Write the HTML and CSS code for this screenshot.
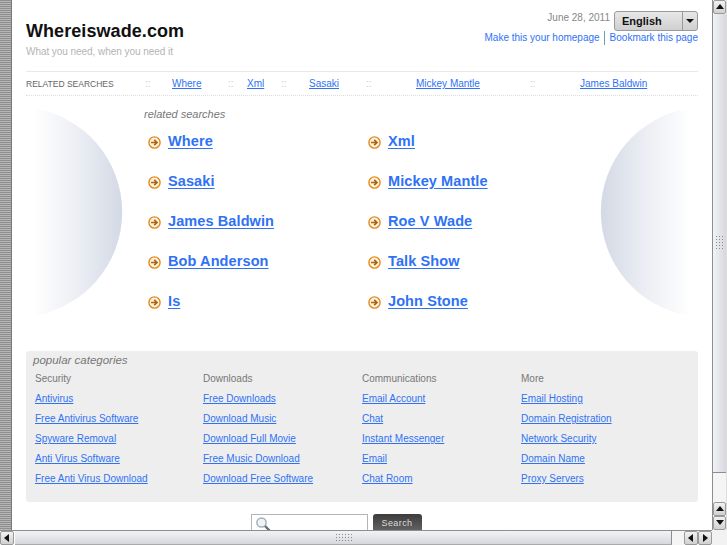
FILE: index.html
```html
<!DOCTYPE html>
<html lang="en">
  <head>
    <meta charset="UTF-8" />
    <meta name="viewport" content="width=device-width, initial-scale=1.0" />
    <title>Whereiswade.com</title>

    <link rel="stylesheet" href="styles.css">
  </head>
  <body>
    <svg class="defs" width="0" height="0" aria-hidden="true">
      <defs>
        <linearGradient id="ball-left" x1="0" y1="0" x2="1" y2="0">
          <stop offset="0" stop-color="#ffffff" />
          <stop offset="0.45" stop-color="#eef0f5" />
          <stop offset="1" stop-color="#d3d9e5" />
        </linearGradient>
        <linearGradient id="ball-right" x1="1" y1="0" x2="0" y2="0">
          <stop offset="0" stop-color="#ffffff" />
          <stop offset="0.45" stop-color="#eef0f5" />
          <stop offset="1" stop-color="#d3d9e5" />
        </linearGradient>
        <symbol id="go" viewBox="0 0 13 13">
          <circle cx="6.5" cy="6.5" r="5.6" fill="#fdf3e2" stroke="#e48a16" stroke-width="1.4" />
          <path d="M3 6.5h5.5M6.2 3.8l2.8 2.7-2.8 2.7" fill="none" stroke="#a9650f" stroke-width="1.7" />
        </symbol>
      </defs>
    </svg>

    <div class="window">
      <div class="strip"></div>

      <div class="page">
        <header class="top">
          <div class="brand">
            <h1>Whereiswade.com</h1>
            <p>What you need, when you need it</p>
          </div>
          <div class="tools">
            <div class="tools-row">
              <span class="date">June 28, 2011</span>
              <div class="lang">
                <span>English</span>
                <i></i>
              </div>
            </div>
            <div class="tools-links">
              <a href="#">Make this your homepage</a>
              <a href="#">Bookmark this page</a>
            </div>
          </div>
        </header>

        <nav class="related-nav">
          <span class="nav-title">RELATED SEARCHES</span>
          <span class="sep">::</span><a href="#">Where</a>
          <span class="sep">::</span><a href="#">Xml</a>
          <span class="sep">::</span><a href="#">Sasaki</a>
          <span class="sep">::</span><a href="#">Mickey Mantle</a>
          <span class="sep">::</span><a href="#">James Baldwin</a>
        </nav>

        <section class="results">
          <svg class="ball" width="90" height="212" viewBox="0 0 90 212">
            <path d="M0 2.2A105 105 0 0 1 0 209.8Z" fill="url(#ball-left)" />
          </svg>

          <div class="results-main">
            <h2>related searches</h2>
            <ul class="result-list">
              <li><svg width="13" height="13"><use href="#go" /></svg><a href="#">Where</a></li>
              <li><svg width="13" height="13"><use href="#go" /></svg><a href="#">Xml</a></li>
              <li><svg width="13" height="13"><use href="#go" /></svg><a href="#">Sasaki</a></li>
              <li><svg width="13" height="13"><use href="#go" /></svg><a href="#">Mickey Mantle</a></li>
              <li><svg width="13" height="13"><use href="#go" /></svg><a href="#">James Baldwin</a></li>
              <li><svg width="13" height="13"><use href="#go" /></svg><a href="#">Roe V Wade</a></li>
              <li><svg width="13" height="13"><use href="#go" /></svg><a href="#">Bob Anderson</a></li>
              <li><svg width="13" height="13"><use href="#go" /></svg><a href="#">Talk Show</a></li>
              <li><svg width="13" height="13"><use href="#go" /></svg><a href="#">Is</a></li>
              <li><svg width="13" height="13"><use href="#go" /></svg><a href="#">John Stone</a></li>
            </ul>
          </div>

          <svg class="ball" width="90" height="212" viewBox="0 0 90 212">
            <path d="M90 2.2A105 105 0 0 0 90 209.8Z" fill="url(#ball-right)" />
          </svg>
        </section>

        <section class="popular">
          <h2>popular categories</h2>
          <div class="cat-grid">
            <ul>
              <li class="cat-head">Security</li>
              <li><a href="#">Antivirus</a></li>
              <li><a href="#">Free Antivirus Software</a></li>
              <li><a href="#">Spyware Removal</a></li>
              <li><a href="#">Anti Virus Software</a></li>
              <li><a href="#">Free Anti Virus Download</a></li>
            </ul>
            <ul>
              <li class="cat-head">Downloads</li>
              <li><a href="#">Free Downloads</a></li>
              <li><a href="#">Download Music</a></li>
              <li><a href="#">Download Full Movie</a></li>
              <li><a href="#">Free Music Download</a></li>
              <li><a href="#">Download Free Software</a></li>
            </ul>
            <ul>
              <li class="cat-head">Communications</li>
              <li><a href="#">Email Account</a></li>
              <li><a href="#">Chat</a></li>
              <li><a href="#">Instant Messenger</a></li>
              <li><a href="#">Email</a></li>
              <li><a href="#">Chat Room</a></li>
            </ul>
            <ul>
              <li class="cat-head">More</li>
              <li><a href="#">Email Hosting</a></li>
              <li><a href="#">Domain Registration</a></li>
              <li><a href="#">Network Security</a></li>
              <li><a href="#">Domain Name</a></li>
              <li><a href="#">Proxy Servers</a></li>
            </ul>
          </div>
        </section>

        <form class="search">
          <div class="search-box">
            <svg width="16" height="16" viewBox="0 0 16 16">
              <circle cx="6.5" cy="6.5" r="4.6" fill="#eef3f8" stroke="#a7b0b8" stroke-width="1.5" />
              <path d="M10 10l4.5 4.5" stroke="#6d6d6d" stroke-width="2.4" />
            </svg>
          </div>
          <button type="button">Search</button>
        </form>
      </div>

      <div class="vbar">
        <div class="sb-btn up"></div>
        <div class="vthumb"><div class="grip"></div></div>
        <div class="vtrack"></div>
        <div class="sb-btn up"></div>
        <div class="sb-btn down"></div>
      </div>

      <div class="hbar">
        <div class="sb-btn left"></div>
        <div class="hthumb"><div class="grip"></div></div>
        <div class="htrack"></div>
        <div class="sb-btn left"></div>
        <div class="sb-btn right"></div>
      </div>
      <div class="corner"></div>
    </div>
  </body>
</html>
```

FILE: styles.css
```css
* {
  box-sizing: border-box;
  list-style: none;
}

:root {
  --link: #2f72f5;
  --grey-text: #777;
  --rule: #e8e8e8;
}

html,
body {
  margin: 0;
  height: 100%;
  overflow: hidden;
}

body {
  font-family: "Liberation Sans", Arial, sans-serif;
  background: #fff;
  color: #666;
}

a {
  color: var(--link);
}

ul {
  margin: 0;
  padding: 0;
}

.defs {
  display: block;
  height: 0;
}

.window {
  display: grid;
  grid-template-columns: 12px 700px 15px;
  grid-template-rows: 530px 15px;
  height: 545px;
  width: 727px;
}

.strip {
  background: repeating-linear-gradient(#8f8f8f 0 1px, #b5b5b5 1px 2px);
  border-right: 1px solid #777;
}

/* page */
.page {
  overflow: hidden;
  padding: 0 14px 0 14px;
}

.top {
  display: flex;
  justify-content: space-between;
  height: 71px;
}

.brand {
  padding-top: 20px;
}

.brand h1 {
  margin: 0;
  color: #111;
  font-size: 18px;
  line-height: 22px;
  letter-spacing: 0.07px;
}

.brand p {
  margin: 4px 0 0;
  color: #b4b4b4;
  font-size: 10px;
  line-height: 12px;
  letter-spacing: -0.05px;
}

.tools {
  padding-top: 11px;
}

.tools-row {
  display: flex;
  justify-content: flex-end;
  gap: 4px;
}

.date {
  padding-top: 1px;
  color: #888;
  font-size: 10px;
  line-height: 12px;
}

.lang {
  display: flex;
  align-items: center;
  justify-content: space-between;
  width: 84px;
  height: 20px;
  border: 1px solid #9a9a9a;
  border-radius: 3px;
  background: linear-gradient(#e8e8e8, #cfcfcf);
  color: #111;
  font-size: 11px;
  font-weight: bold;
}

.lang span {
  padding-left: 7px;
}

.lang i {
  position: relative;
  width: 15px;
  height: 18px;
  border-left: 1px solid #9a9a9a;
}

.lang i::after {
  content: "";
  position: absolute;
  left: 3px;
  top: 7px;
  border: 4px solid transparent;
  border-top: 4px solid #111;
  border-bottom: 0;
}

.tools-links {
  display: flex;
  justify-content: flex-end;
  font-size: 10px;
  line-height: 14px;
}

.tools-links a {
  text-decoration: none;
}

.tools-links a + a {
  margin-left: 4px;
  padding-left: 5px;
  border-left: 1px solid #6a9fb0;
}

.related-nav {
  display: grid;
  grid-template-columns: 119px 27px 56px 19px 34px 28px 57px 50px 114px 50px 1fr;
  align-items: center;
  height: 25px;
  border-top: 1px solid var(--rule);
  border-bottom: 1px dotted #ddd;
  font-size: 10px;
}

.nav-title {
  color: #666;
  font-size: 8.5px;
}

.sep {
  color: #ccc;
}

.results {
  display: flex;
  justify-content: space-between;
  height: 255px;
  padding: 10px 8px 0 7px;
}

.results-main {
  flex: 1;
  padding: 0 0 0 21px;
}

.results h2,
.popular h2 {
  margin: 0;
  color: var(--grey-text);
  font-size: 11px;
  font-style: italic;
  font-weight: normal;
}

.results h2 {
  margin-top: 2px;
  line-height: 13px;
}

.result-list {
  display: grid;
  grid-template-columns: 220px 1fr;
  grid-auto-rows: 40px;
  padding: 6px 0 0 4px;
}

.result-list li {
  display: flex;
  align-items: center;
  gap: 7px;
  height: 28px;
}

.result-list a {
  font-size: 14.5px;
  font-weight: bold;
  letter-spacing: 0.1px;
  text-underline-offset: 2px;
}

.result-list svg {
  flex: none;
  margin-top: 2px;
}

.popular {
  height: 151px;
  padding: 3px 7px;
  border-radius: 3px;
  background: #eee;
}

.popular h2 {
  line-height: 13px;
  font-size: 11.5px;
}

.cat-grid {
  display: grid;
  grid-template-columns: 168px 159px 159px 1fr;
  margin-top: 2px;
  padding-left: 2px;
}

.cat-grid li {
  height: 20px;
  font-size: 10px;
  line-height: 20px;
}

.cat-head {
  color: var(--grey-text);
}

.search {
  display: flex;
  justify-content: center;
  gap: 5px;
  margin-top: 12px;
  padding-right: 52px;
}

.search-box {
  width: 117px;
  height: 20px;
  padding: 1px 0 0 3px;
  border: 1px solid #b5b5b5;
  background: #fff;
}

.search-box svg {
  display: block;
}

.search button {
  width: 49px;
  height: 20px;
  padding: 0 0 3px;
  border: 0;
  border-radius: 3px 3px 0 0;
  background: linear-gradient(#3c3c3c, #6a6a6a);
  color: #ddd;
  font-family: inherit;
  font-size: 9px;
  letter-spacing: 0.4px;
}

/* scrollbars */
.vbar {
  display: flex;
  flex-direction: column;
  border-left: 1px solid #8e8e8e;
  border-right: 1px solid #ddd;
  background: #fff;
}

.hbar {
  grid-column: 1 / 3;
  display: flex;
  border-top: 1px solid #8e8e8e;
  background: #fff;
}

.corner {
  background: #f2f2f2;
}

.sb-btn {
  position: relative;
  flex: none;
  width: 14px;
  height: 14px;
  border: 1px solid #9a9a9a;
  border-radius: 2px;
  background: linear-gradient(#f2f2f2, #cfd0d3);
}

.vbar .sb-btn {
  width: 13px;
}

.sb-btn::after {
  content: "";
  position: absolute;
  left: 2px;
  top: 3px;
  border: 4px solid transparent;
}

.up::after {
  border-top: 0;
  border-bottom: 5px solid #111;
}

.down::after {
  border-bottom: 0;
  border-top: 5px solid #111;
}

.left::after {
  left: 3px;
  top: 2px;
  border-left: 0;
  border-right: 5px solid #111;
}

.right::after {
  left: 4px;
  top: 2px;
  border-right: 0;
  border-left: 5px solid #111;
}

.vthumb {
  display: flex;
  align-items: center;
  justify-content: center;
  height: 459px;
  background: linear-gradient(90deg, #f1f3f7, #d6d8dd);
  border-bottom: 1px solid #8e8e8e;
}

.vtrack {
  flex: 1;
  background: #f5f5f5;
}

.hbar .sb-btn:first-child {
  margin-right: 1px;
}

.hthumb {
  display: flex;
  align-items: center;
  justify-content: center;
  width: 657px;
  background: linear-gradient(#f1f3f7, #d6d8dd);
  border-right: 1px solid #8e8e8e;
  border-bottom: 1px solid #aaa;
}

.htrack {
  width: 12px;
  background: #f5f5f5;
}

.grip {
  width: 10px;
  height: 16px;
  background: radial-gradient(circle, #888 0.6px, transparent 1px) 0 0 / 3px 3px;
}

.hthumb .grip {
  width: 17px;
  height: 9px;
}
```
